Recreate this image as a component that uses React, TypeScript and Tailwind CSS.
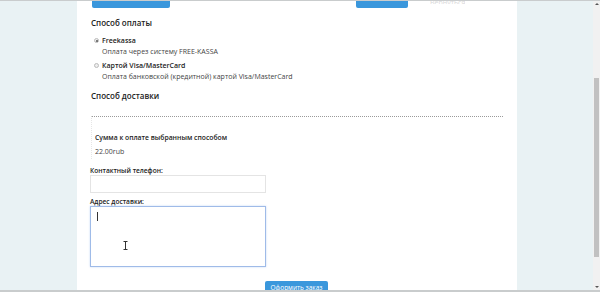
export default function App() {
  return (
    <div className="w-[600px] h-[292px] overflow-hidden flex flex-col bg-[#e9f2f4] text-[#222] font-['Open_Sans',sans-serif]">
      <div className="h-[1px] shrink-0 bg-[#c9cccd]"></div>
      <div className="flex flex-1 min-h-0">
        <div className="w-[77px] shrink-0"></div>

        <div className="w-[440px] shrink-0 bg-white pl-[13px] pr-[14px] overflow-hidden">
          {/* top buttons, cut off */}
          <div className="h-[7px] flex items-end overflow-hidden">
            <div className="ml-[2px] w-[78px] h-[7px] rounded-b-[2px] bg-[#3a97dc]"></div>
            <div className="ml-[186px] w-[52px] h-[7px] rounded-b-[2px] bg-[#3a97dc]"></div>
            <div className="ml-[22px] self-start h-[3px] overflow-hidden text-[7px] leading-[3px] text-[#d8d8d8]">
              Вернуться
            </div>
          </div>

          <h2 className="mt-[9px] ml-[1px] h-[12px] leading-[12px] text-[8px] font-semibold">Способ оплаты</h2>

          <div className="mt-[6px] pl-[4px]">
            <label className="flex items-center h-[11px]">
              <span className="w-[5px] h-[5px] rounded-full border border-[#bbb] bg-[#eee] flex items-center justify-center">
                <span className="w-[2px] h-[2px] rounded-full bg-[#555]"></span>
              </span>
              <span className="ml-[3px] text-[7px] leading-[11px] font-semibold">Freekassa</span>
            </label>
            <p className="pl-[8px] h-[11px] leading-[11px] text-[7px] text-[#444]">Оплата через систему FREE-KASSA</p>

            <label className="mt-[3px] flex items-center h-[11px]">
              <span className="w-[5px] h-[5px] rounded-full border border-[#bbb] bg-[#eee]"></span>
              <span className="ml-[3px] text-[7px] leading-[11px] font-semibold">Картой Visa/MasterCard</span>
            </label>
            <p className="pl-[8px] h-[11px] leading-[11px] text-[7px] text-[#444]">
              Оплата банковской (кредитной) картой Visa/MasterCard
            </p>
          </div>

          <h2 className="mt-[8px] ml-[1px] h-[12px] leading-[12px] text-[8px] font-semibold">Способ доставки</h2>

          <div className="mt-[14px] ml-[1px] border-t border-dotted border-t-[#9a9a9a] border-l border-l-[#e6e6e6] pl-[3px] pt-[15px] pb-[1px]">
            <p className="h-[12px] leading-[12px] text-[6.8px] font-semibold">Сумма к оплате выбранным способом</p>
            <p className="mt-[2px] h-[12px] leading-[12px] text-[7px] text-[#444]">22.00rub</p>
          </div>

          <p className="mt-[8px] h-[8px] leading-[8px] text-[6.6px] font-semibold">Контактный телефон:</p>
          <div className="w-[176px] h-[18px] border border-[#e4e4e4] bg-white"></div>

          <p className="mt-[4px] h-[9px] leading-[9px] text-[6.6px] font-semibold">Адрес доставки:</p>
          <div className="w-[176px] h-[61px] border border-[#9fbbe8] shadow-[0_0_2px_#c8d8f4] bg-white flex flex-col items-start pl-[6px] pt-[5px]">
            <span className="w-[1px] h-[9px] bg-[#333]"></span>
            <svg className="ml-[26px] mt-[20px]" width="5" height="9" viewBox="0 0 5 9">
              <path d="M0.5 0.5h4M2.5 0.5v8M0.5 8.5h4" stroke="#333" strokeWidth="1" fill="none" />
            </svg>
          </div>

          <div className="mt-[14px] ml-[175px] w-[63px] h-[14px] rounded-[2px] bg-[#3a97dc] text-white text-[6.5px] leading-[14px] text-center">
            Оформить заказ
          </div>
        </div>

        <div className="flex-1"></div>

        <div className="w-[7px] shrink-0 bg-[#f1f1f1] flex flex-col items-center">
          <div className="h-[6px] flex items-center justify-center">
            <div className="w-0 h-0 border-l-[2px] border-r-[2px] border-b-[2px] border-l-transparent border-r-transparent border-b-[#555]"></div>
          </div>
          <div className="mt-[71px] w-[5px] h-[179px] bg-[#c1c1c1]"></div>
          <div className="flex-1"></div>
          <div className="h-[6px] flex items-center justify-center">
            <div className="w-0 h-0 border-l-[2px] border-r-[2px] border-t-[2px] border-l-transparent border-r-transparent border-t-[#555]"></div>
          </div>
        </div>
      </div>
      <div className="h-[2px] shrink-0 bg-[#c9cccd]"></div>
    </div>
  );
}
